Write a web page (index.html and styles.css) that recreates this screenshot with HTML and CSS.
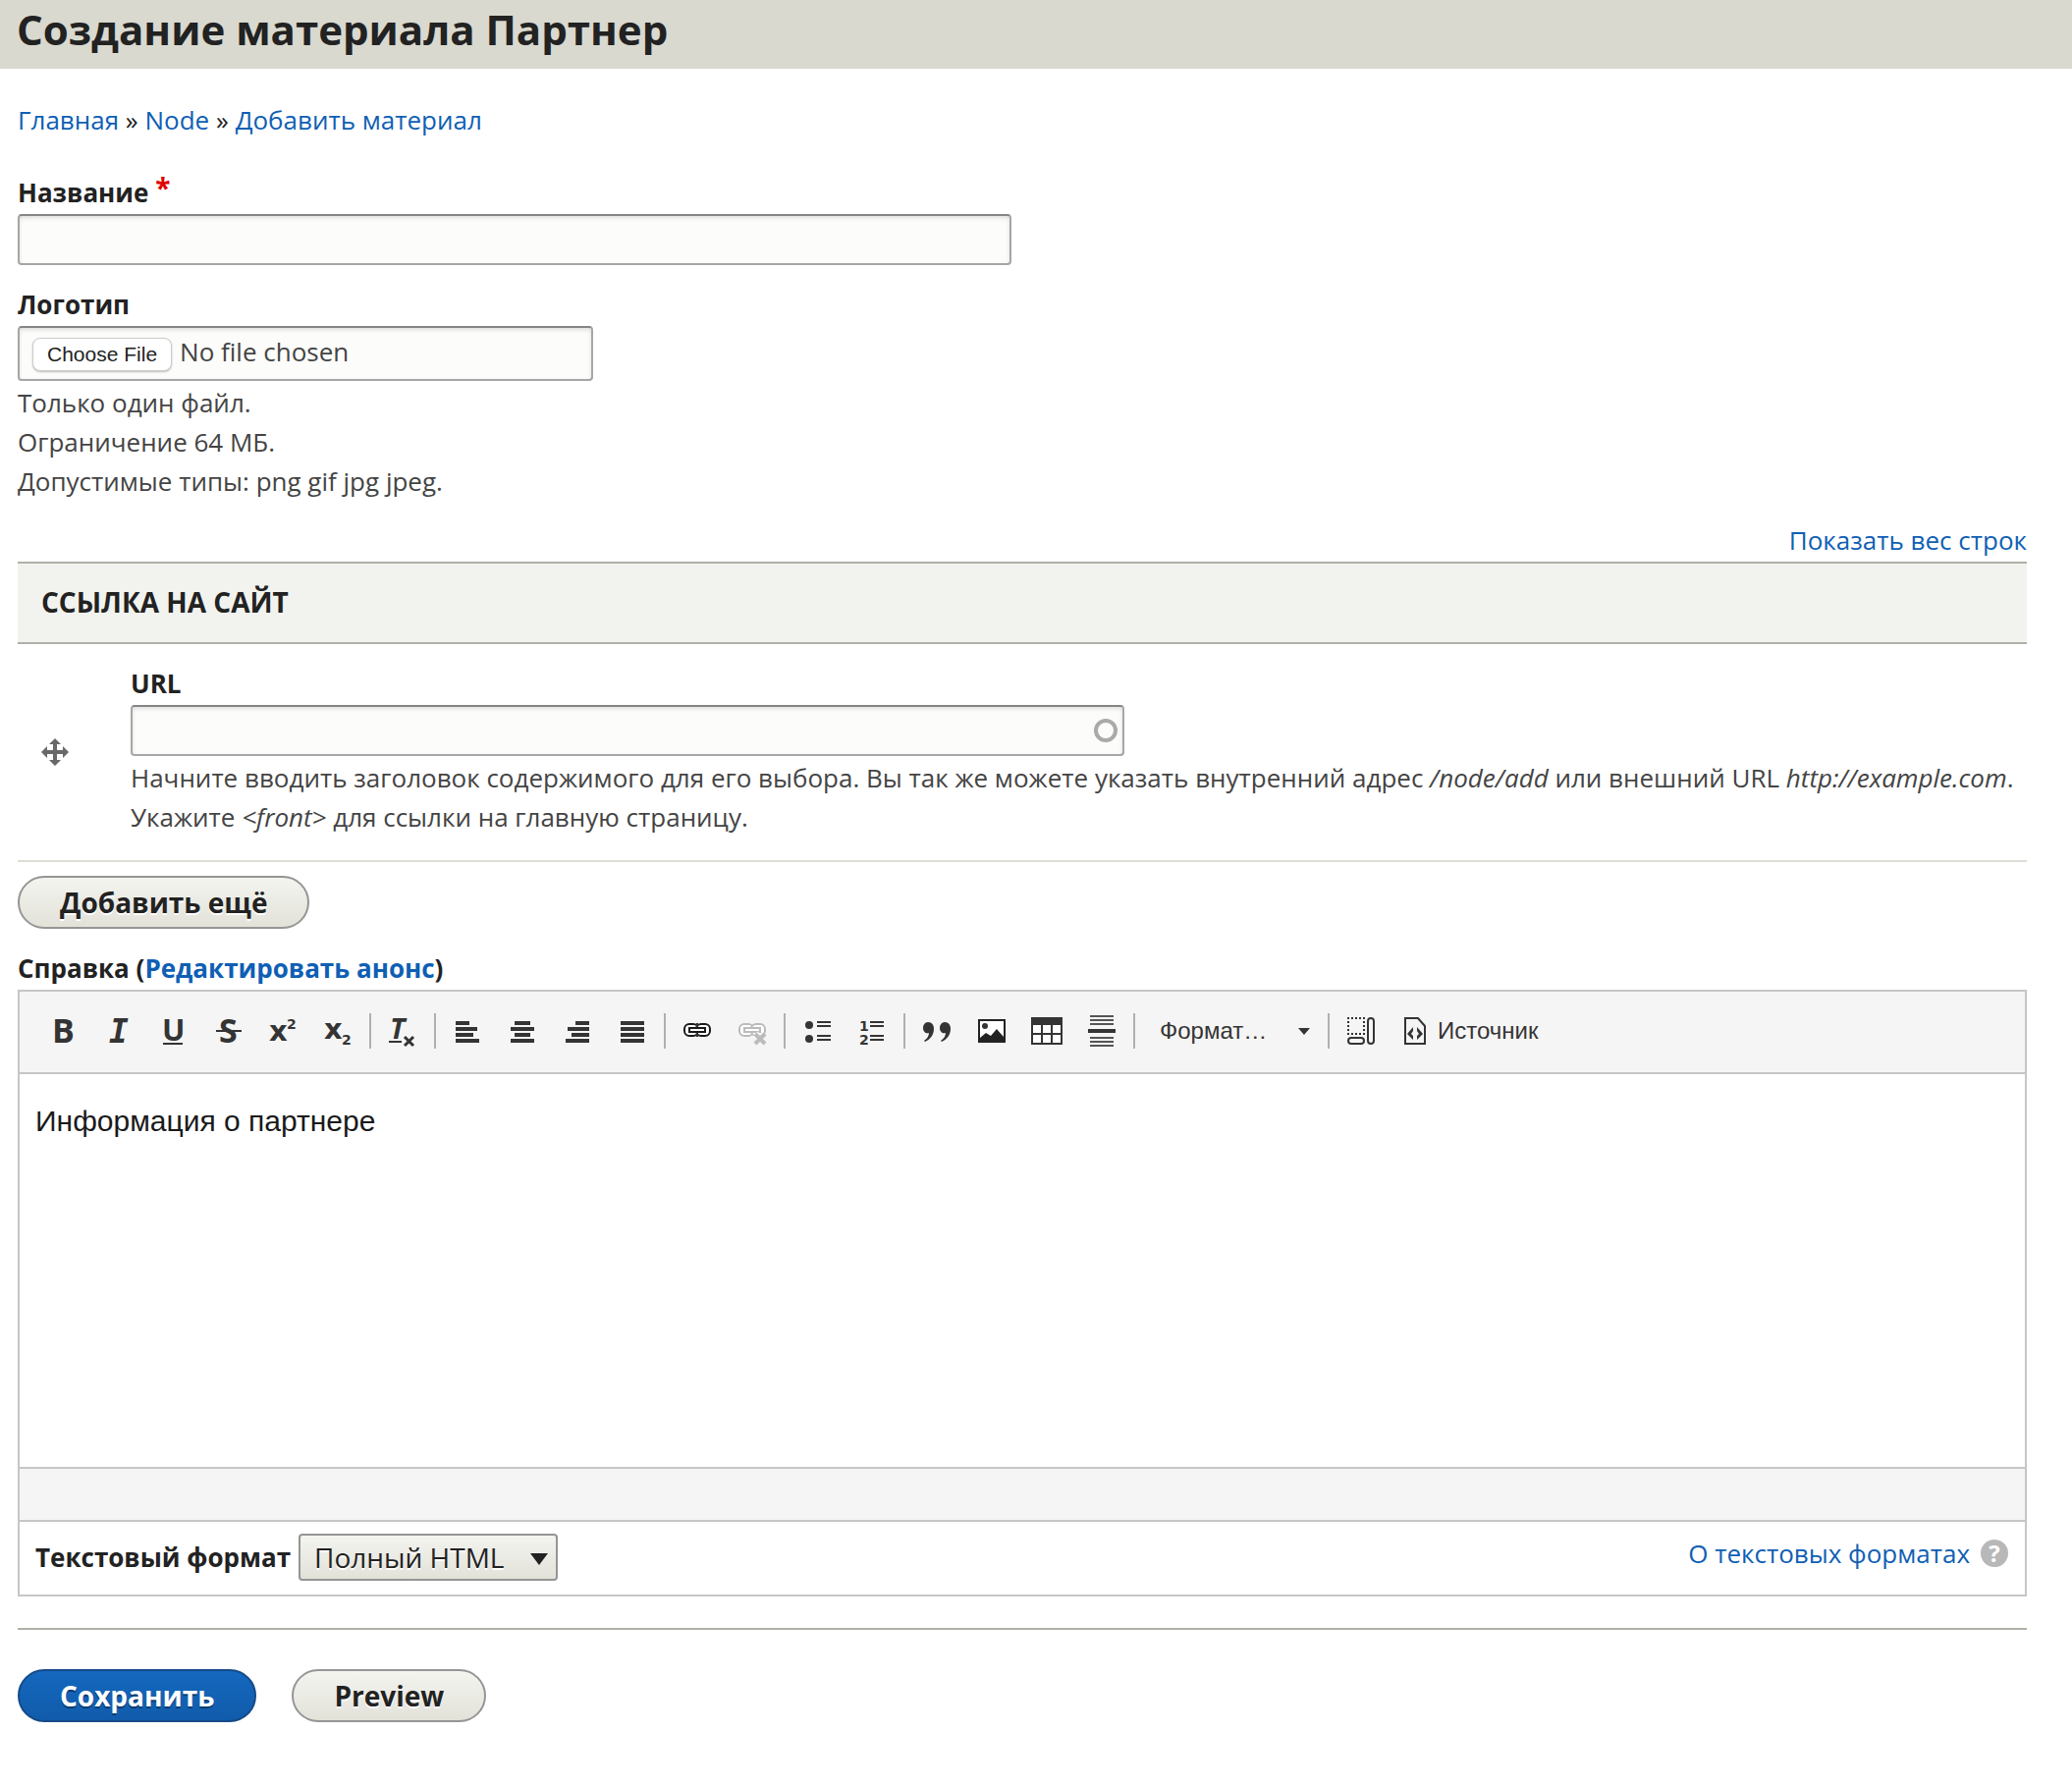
FILE: index.html
```html
<!DOCTYPE html>
<html lang="ru">
<head>
<meta charset="utf-8">
<title>Создание материала Партнер</title>
<link rel="stylesheet" href="styles.css">
</head>
<body>
<header class="page-header"><h1 class="page-title">Создание материала Партнер</h1></header>
<main class="page">
  <nav class="breadcrumb"><a href="#">Главная</a> » <a href="#">Node</a> » <a href="#">Добавить материал</a></nav>
  <form class="node-form">
    <div class="field field-name">
      <label class="label" for="title">Название <span class="required">*</span></label>
      <input class="text-input" id="title" type="text">
    </div>
    <div class="field">
      <label class="label" for="logo">Логотип</label>
      <input class="file-input" id="logo" type="file">
      <div class="description">Только один файл.<br>Ограничение 64 МБ.<br>Допустимые типы: png gif jpg jpeg.</div>
    </div>
    <div class="weight-toggle"><a href="#">Показать вес строк</a></div>
    <table class="links">
      <thead><tr><th colspan="2">ССЫЛКА НА САЙТ</th></tr></thead>
      <tbody><tr>
        <td class="drag-cell"><a class="drag" href="#" aria-label="Переместить"><svg width="28" height="28" viewBox="0 0 28 28" fill="#696969"><path d="M14 0l6 6h-4v6h6V8l6 6-6 6v-4h-6v6h4l-6 6-6-6h4v-6H6v4l-6-6 6-6v4h6V6H8z"/></svg></a></td>
        <td class="link-cell">
          <label class="label" for="url">URL</label>
          <input class="text-input url-input" id="url" type="text">
          <div class="description">Начните вводить заголовок содержимого для его выбора. Вы так же можете указать внутренний адрес <em>/node/add</em> или внешний URL <em>http://example.com</em>. Укажите <em>&lt;front&gt;</em> для ссылки на главную страницу.</div>
        </td>
      </tr></tbody>
    </table>
    <button class="button add-more" type="button">Добавить ещё</button>
    <div class="field-body">
      <label class="label" for="body">Справка (<a href="#">Редактировать анонс</a>)</label>
      <div class="editor">
        <div class="toolbar">
          <button class="tool" type="button" aria-label="Полужирный"><svg viewBox="0 0 32 32"><text class="g" x="5" y="28">B</text></svg></button>
          <button class="tool" type="button" aria-label="Курсив"><svg viewBox="0 0 32 32"><text class="g mono" x="7" y="28">I</text></svg></button>
          <button class="tool" type="button" aria-label="Подчёркнутый"><svg viewBox="0 0 32 32"><text class="g small" x="5" y="26">U</text><path d="M6 28h20v2H6z"/></svg></button>
          <button class="tool" type="button" aria-label="Зачёркнутый"><svg viewBox="0 0 32 32"><text class="g" x="7" y="28">S</text><path d="M4 15h26v2H4z"/></svg></button>
          <button class="tool" type="button" aria-label="Надстрочный"><svg viewBox="0 0 32 32"><text class="g x" x="2" y="26">x</text><text class="g digit" x="20" y="14">2</text></svg></button>
          <button class="tool" type="button" aria-label="Подстрочный"><svg viewBox="0 0 32 32"><text class="g x" x="2" y="24">x</text><text class="g digit" x="20" y="30">2</text></svg></button>
          <span class="sep"></span>
          <button class="tool" type="button" aria-label="Убрать форматирование"><svg viewBox="0 0 32 32"><text class="g tee" x="3" y="24">T</text><path d="M2 26h13v2H2z"/><path d="M18 22l9 9M27 22l-9 9" stroke="#343434" stroke-width="3"/></svg></button>
          <span class="sep"></span>
          <button class="tool" type="button" aria-label="По левому краю"><svg viewBox="0 0 32 32"><path d="M4 6h14v4H4zM4 12h22v4H4zM4 18h18v4H4zM4 24h24v4H4z"/></svg></button>
          <button class="tool" type="button" aria-label="По центру"><svg viewBox="0 0 32 32"><path d="M8 6h16v4H8zM4 12h24v4H4zM8 18h16v4H8zM4 24h24v4H4z"/></svg></button>
          <button class="tool" type="button" aria-label="По правому краю"><svg viewBox="0 0 32 32"><path d="M14 6h14v4H14zM6 12h22v4H6zM10 18h18v4H10zM4 24h24v4H4z"/></svg></button>
          <button class="tool" type="button" aria-label="По ширине"><svg viewBox="0 0 32 32"><path d="M4 6h24v4H4zM4 12h24v4H4zM4 18h24v4H4zM4 24h24v4H4z"/></svg></button>
          <span class="sep"></span>
          <button class="tool" type="button" aria-label="Ссылка"><svg viewBox="0 0 32 32"><g fill="#fff" stroke="#1a1a1a" stroke-width="2"><rect x="3" y="9" width="14" height="12" rx="5"/><rect x="15" y="9" width="14" height="12" rx="5"/><path d="M8 13h16v4H8z"/></g><path d="M15 8h2v4h-2zM15 18h2v4h-2z"/><path d="M9 14h14v2H9z" fill="#fff"/></svg></button>
          <button class="tool" type="button" aria-label="Удалить ссылку" disabled><svg viewBox="0 0 32 32"><g fill="#fff" stroke="#bbb" stroke-width="2"><rect x="3" y="9" width="14" height="12" rx="5"/><rect x="15" y="9" width="14" height="12" rx="5"/><path d="M8 13h16v4H8z"/></g><path d="M19 19l10 10M29 19l-10 10" stroke="#f5f5f5" stroke-width="7"/><path d="M19 19l10 10M29 19l-10 10" stroke="#bbb" stroke-width="4"/></svg></button>
          <span class="sep"></span>
          <button class="tool" type="button" aria-label="Маркированный список"><svg viewBox="0 0 32 32"><circle cx="8" cy="10" r="4"/><circle cx="8" cy="24" r="4"/><path d="M16 6h14v2H16zM16 10h14v2H16zM16 20h14v2H16zM16 24h14v2H16z"/></svg></button>
          <button class="tool" type="button" aria-label="Нумерованный список"><svg viewBox="0 0 32 32"><text class="g digit" x="3" y="16">1</text><text class="g digit" x="3" y="30">2</text><path d="M14 6h14v2H14zM14 10h14v2H14zM14 20h14v2H14zM14 24h14v2H14z"/></svg></button>
          <span class="sep"></span>
          <button class="tool" type="button" aria-label="Цитата"><svg viewBox="0 0 32 32"><path d="M7 7c4 0 6 3 6 7 0 6-4 11-9 13l-1-1c3-2 5-5 5-8-3 1-6-1-6-5 0-3 2-6 5-6z"/><path d="M24 7c4 0 6 3 6 7 0 6-4 11-9 13l-1-1c3-2 5-5 5-8-3 1-6-1-6-5 0-3 2-6 5-6z"/></svg></button>
          <button class="tool" type="button" aria-label="Изображение"><svg viewBox="0 0 32 32"><path d="M2 4h28v24H2z" fill="#222"/><path d="M4 6h24v16l-7-8-6 7-5-3-6 5z" fill="#fff"/><circle cx="9" cy="11" r="3"/></svg></button>
          <button class="tool" type="button" aria-label="Таблица"><svg viewBox="0 0 32 32"><path d="M0 2h32v28H0z"/><path d="M2 10h8v8H2zM12 10h8v8h-8zM22 10h8v8h-8zM2 20h8v8H2zM12 20h8v8h-8zM22 20h8v8h-8z" fill="#fff"/></svg></button>
          <button class="tool" type="button" aria-label="Горизонтальная линия"><svg viewBox="0 0 32 32"><path d="M2 14h28v4H2z"/><path d="M4 0h24v2H4zM4 4h24v2H4zM4 8h24v2H4zM4 22h24v2H4zM4 26h24v2H4zM4 30h24v2H4z" fill="#555"/></svg></button>
          <span class="sep"></span>
          <button class="combo" type="button"><span>Формат…</span><svg width="12" height="7" viewBox="0 0 12 7"><path d="M0 0h12L6 7z"/></svg></button>
          <span class="sep"></span>
          <button class="tool" type="button" aria-label="Показать блоки"><svg viewBox="0 0 32 32"><g fill="none" stroke="#343434" stroke-width="2"><path d="M2 3h18M2 19h18" stroke-dasharray="2 2"/><path d="M3 6v12M19 6v12" stroke-dasharray="2 2"/><rect x="3" y="23" width="16" height="6" rx="3"/><rect x="23" y="3" width="6" height="26" rx="3"/></g></svg></button>
          <button class="tool source" type="button"><svg viewBox="0 0 32 32"><path d="M5 3h13l7 8v18H5z" fill="none" stroke="#343434" stroke-width="2"/><path d="M13 12l-6 7 6 6v-4l-2-2 2-3zM17 12l6 7-6 6v-4l2-2-2-3z"/></svg><span>Источник</span></button>
        </div>
        <textarea class="editor-area" id="body">Информация о партнере</textarea>
        <div class="editor-bottom"></div>
        <div class="format-row">
          <div class="format-choice">
            <label class="label" for="format">Текстовый формат</label>
            <span class="select-wrap"><select class="format-select" id="format"><option>Полный HTML</option></select><svg class="select-arrow" width="18" height="12" viewBox="0 0 18 12"><path d="M0 0h18L9 12z"/></svg></span>
          </div>
          <a class="format-help" href="#">О текстовых форматах<svg width="30" height="30" viewBox="0 0 30 30"><circle cx="15" cy="15" r="14" fill="#b8b8b8"/><text class="question" x="15" y="24" text-anchor="middle">?</text></svg></a>
        </div>
      </div>
    </div>
    <div class="actions">
      <button class="button primary" type="submit">Сохранить</button>
      <button class="button" type="button">Preview</button>
    </div>
  </form>
</main>
</body>
</html>
```
FILE: styles.css
```css
* { box-sizing: border-box; }
body { margin: 0; background: #fff; color: #222; font: 26px/40px "Open Sans", "Noto Sans", sans-serif; }
a { color: #0f5fb4; text-decoration: none; }
.page-header { padding: 0 17px 10px; background: #d9d9cf; }
.page-title { margin: 0; font-size: 42px; line-height: 60px; font-weight: 700; }
.page { padding: 32px 46px 64px 18px; }
.breadcrumb { line-height: 40px; margin-bottom: 36px; }
.label { display: block; font-weight: 700; line-height: 36px; padding-bottom: 4px; }
.required { color: #e00000; font-size: 28px; line-height: 20px; vertical-align: 4px; }
.field { margin-bottom: 22px; }
.text-input, .file-input {
  display: block; height: 52px; width: 1012px; max-width: 100%; padding: 0 14px;
  border: 2px solid #a6a6a6; border-top-color: #858585; border-radius: 4px;
  background: #fcfcfa; box-shadow: inset 0 2px 4px rgba(0,0,0,.12); color: #444; font: inherit;
}
.file-input { width: 586px; height: 56px; padding: 7px 13px; line-height: 34px; }
.file-input::file-selector-button {
  height: 34px; margin: 0 8px 0 0; padding: 0 14px; border: 1px solid #ccc; border-radius: 8px;
  background: #fff; box-shadow: 0 1px 2px rgba(0,0,0,.25); color: #222; font: 21px "Liberation Sans", sans-serif;
}
.description { color: #444; font-size: 26px; line-height: 40px; padding-top: 2px; }
.weight-toggle { text-align: right; line-height: 36px; padding-bottom: 4px; }
.links { width: 100%; border-collapse: collapse; }
.links th { height: 82px; padding: 0 24px 2px; border-top: 2px solid #b0b0a8; border-bottom: 2px solid #b0b0a8; background: #f2f3ee; text-align: left; font-size: 28px; font-weight: 700; }
.links td { border-bottom: 2px solid #deded6; vertical-align: middle; }
.drag-cell { width: 115px; padding: 0 24px; }
.drag { display: flex; }
.link-cell { padding: 22px 0 24px; }
.url-input {
  background: #fcfcfa url("data:image/svg+xml,%3Csvg xmlns='http://www.w3.org/2000/svg' width='26' height='26'%3E%3Ccircle cx='13' cy='13' r='10' fill='none' stroke='%23aaa' stroke-width='4'/%3E%3C/svg%3E") no-repeat right 4px center;
}
.button {
  height: 54px; padding: 0 41px; border: 2px solid #959595; border-radius: 27px;
  background: linear-gradient(#f4f4f0, #e2e2d9); color: #222; font: 700 28px/40px "Open Sans", "Noto Sans", sans-serif;
  text-shadow: 0 2px #fff;
}
.primary { border-color: #164a88; background: linear-gradient(#1468be, #115bab); color: #fff; text-shadow: 0 2px #0b3c70; }
.add-more { display: block; margin-top: 14px; }
.field-body { margin-top: 22px; }
.editor { border: 2px solid #c6c6c6; }
.toolbar { display: flex; align-items: center; height: 84px; padding: 0 16px 2px; border-bottom: 2px solid #c6c6c6; background: #f5f5f5; }
.tool, .combo { display: flex; align-items: center; justify-content: center; width: 56px; height: 56px; padding: 0; border: 0; background: none; color: #343434; font: 24px "Liberation Sans", sans-serif; }
.tool svg { width: 32px; height: 32px; flex: none; fill: #343434; overflow: visible; }
.source { width: auto; padding: 0 12px; gap: 6px; }
.combo { width: 188px; justify-content: space-between; padding: 0 14px 0 21px; }
.combo svg { fill: #343434; }
.sep { width: 2px; height: 36px; margin: 0 4px; background: #b0b0b0; }
.g { font: 700 34px "Open Sans", sans-serif; }
.g.mono { font: italic 700 33px "DejaVu Sans Mono", monospace; }
.g.small { font-size: 31px; }
.g.x { font: 700 29px "DejaVu Sans", sans-serif; }
.g.digit { font: 700 14px "DejaVu Sans", sans-serif; }
.g.tee { font-size: 29px; font-style: italic; }
.editor-area { display: block; width: 100%; height: 400px; padding: 28px 16px; border: 0; resize: none; color: #1a1a1a; font: 30px/40px "Liberation Sans", sans-serif; }
.editor-bottom { height: 56px; border: solid #c6c6c6; border-width: 2px 0; background: #f5f5f5; }
.format-row { display: flex; justify-content: space-between; align-items: flex-start; padding: 12px 16px 14px; }
.format-choice { display: flex; align-items: center; gap: 8px; }
.format-choice .label { padding: 0; }
.select-wrap { display: flex; position: relative; }
.format-select { appearance: none; height: 48px; width: 264px; padding: 0 14px; border: 2px solid #959595; border-radius: 4px; background: linear-gradient(#f4f4f0, #e2e2d9); color: #222; font: 28px "Open Sans", "Noto Sans", sans-serif; text-shadow: 0 2px #fff; }
.select-arrow { position: absolute; right: 10px; top: 20px; fill: #222; pointer-events: none; }
.format-help { display: flex; align-items: center; gap: 10px; }
.question { font: 700 24px "Open Sans", sans-serif; fill: #fff; }
.actions { display: flex; gap: 36px; margin-top: 32px; padding-top: 40px; border-top: 2px solid #b0b0a8; }
```
